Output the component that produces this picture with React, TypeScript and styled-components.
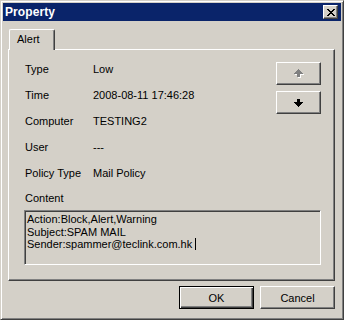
import React from "react";
import styled, { createGlobalStyle } from "styled-components";

const GlobalStyle = createGlobalStyle`
  html, body { margin: 0; padding: 0; background: #d4d0c8; }
  * { box-sizing: border-box; }
`;

const Window = styled.div`
  width: 344px;
  height: 320px;
  background: #d4d0c8;
  border: 1px solid;
  border-color: #d4d0c8 #404040 #404040 #d4d0c8;
  box-shadow: inset 1px 1px #fff, inset -1px -1px #808080;
  padding: 2px;
  display: flex;
  flex-direction: column;
  font-family: "Liberation Sans", Arial, sans-serif;
  font-size: 11px;
  color: #000;
`;

const TitleBar = styled.div`
  height: 18px;
  flex: none;
  background: #0a246a;
  display: flex;
  align-items: center;
  justify-content: space-between;
  padding: 0 3px 0 2px;
`;

const TitleText = styled.span`
  color: #fff;
  font-weight: bold;
  font-size: 12px;
  letter-spacing: 0.1px;
`;

const Raised = styled.div`
  background: #d4d0c8;
  border: 1px solid;
  border-color: #fff #404040 #404040 #fff;
  box-shadow: inset -1px -1px #808080;
`;

const CloseButton = styled(Raised)`
  width: 15px;
  height: 14px;
  display: flex;
  align-items: center;
  justify-content: center;
`;

const Body = styled.div`
  flex: 1;
  display: flex;
  flex-direction: column;
  padding: 8px 6px 8px 5px;
`;

const TabStrip = styled.div`
  height: 20px;
  flex: none;
  display: flex;
  padding-left: 1px;
  position: relative;
  z-index: 1;
`;

const Tab = styled.div`
  width: 46px;
  height: 21px;
  background: #d4d0c8;
  border-top: 1px solid #fff;
  border-left: 1px solid #fff;
  border-right: 1px solid #404040;
  box-shadow: inset -1px 0 #808080;
  border-radius: 2px 2px 0 0;
  padding: 3px 0 0 7px;
  line-height: 13px;
`;

const Panel = styled.div`
  flex: 1;
  display: flex;
  flex-direction: column;
  border-top: 1px solid #fff;
  border-left: 1px solid #fff;
  border-right: 1px solid #404040;
  border-bottom: 1px solid #404040;
  box-shadow: inset -1px -1px #808080;
  padding: 6px 13px 0 15px;
`;

const TopSection = styled.div`
  display: flex;
`;

const InfoList = styled.div`
  flex: 1;
  display: flex;
  flex-direction: column;
`;

const Row = styled.div<{ $h?: number }>`
  display: grid;
  grid-template-columns: 68px 1fr;
  height: ${(p) => p.$h ?? 26}px;
  line-height: ${(p) => p.$h ?? 26}px;
  padding-left: 1px;
  white-space: nowrap;
`;

const ButtonCol = styled.div`
  display: flex;
  flex-direction: column;
  gap: 6px;
  padding-top: 6px;
`;

const PushButton = styled(Raised)<{ $w?: number; $default?: boolean }>`
  width: ${(p) => p.$w ?? 45}px;
  height: 23px;
  display: flex;
  align-items: center;
  justify-content: center;
  ${(p) =>
    p.$default
      ? `border-color: #000;
         box-shadow: inset 1px 1px #fff, inset -1px -1px #404040, inset -2px -2px #808080;`
      : ``}
`;

const ContentLabelRow = styled.div`
  height: 24px;
  line-height: 24px;
  padding-left: 1px;
`;

const TextBox = styled.div`
  height: 55px;
  border: 1px solid;
  border-color: #808080 #fff #fff #808080;
  box-shadow: inset 1px 1px #404040, inset -1px -1px #d4d0c8;
  background: #d4d0c8;
  padding: 2px 2px;
  line-height: 12.5px;
  white-space: nowrap;
  overflow: hidden;
`;

const Caret = styled.span`
  display: inline-block;
  width: 1px;
  height: 12px;
  background: #000;
  vertical-align: -2px;
  margin-left: 3px;
`;

const Footer = styled.div`
  flex: none;
  display: flex;
  justify-content: flex-end;
  gap: 6px;
  margin-top: 5px;
`;

const ButtonLabel = styled.span`
  font-size: 11px;
`;

const Pixels: React.FC<{ rows: [number, number, number][]; w: number; h: number; color: string }> = ({
  rows,
  w,
  h,
  color,
}) => (
  <svg width={w} height={h} viewBox={`0 0 ${w} ${h}`} shapeRendering="crispEdges">
    {rows.map(([x, y, len], i) => (
      <rect key={i} x={x} y={y} width={len} height={1} fill={color} />
    ))}
  </svg>
);

const closeRows: [number, number, number][] = [
  [0, 0, 2], [6, 0, 2],
  [1, 1, 2], [5, 1, 2],
  [2, 2, 4],
  [3, 3, 2],
  [2, 4, 4],
  [1, 5, 2], [5, 5, 2],
  [0, 6, 2], [6, 6, 2],
];

const downRows: [number, number, number][] = [
  [3, 0, 3], [3, 1, 3], [3, 2, 3],
  [0, 3, 9], [1, 4, 7], [2, 5, 5], [3, 6, 3], [4, 7, 1],
];

const upRows: [number, number, number][] = [
  [4, 0, 1], [3, 1, 3], [2, 2, 5], [1, 3, 7], [0, 4, 9],
  [3, 5, 3], [3, 6, 3], [3, 7, 3],
];

const DisabledIcon = styled.div`
  position: relative;
  width: 10px;
  height: 9px;
  & > svg { position: absolute; }
  & > svg:first-child { left: 1px; top: 1px; }
  & > svg:last-child { left: 0; top: 0; }
`;

const rows = [
  ["Type", "Low"],
  ["Time", "2008-08-11 17:46:28"],
  ["Computer", "TESTING2"],
  ["User", "---"],
  ["Policy Type", "Mail Policy"],
];

export default function App() {
  return (
    <>
      <GlobalStyle />
      <Window>
        <TitleBar>
          <TitleText>Property</TitleText>
          <CloseButton>
            <Pixels rows={closeRows} w={8} h={7} color="#000" />
          </CloseButton>
        </TitleBar>
        <Body>
          <TabStrip>
            <Tab>Alert</Tab>
          </TabStrip>
          <Panel>
            <TopSection>
              <InfoList>
                {rows.map(([k, v]) => (
                  <Row key={k}>
                    <span>{k}</span>
                    <span>{v}</span>
                  </Row>
                ))}
              </InfoList>
              <ButtonCol>
                <PushButton>
                  <DisabledIcon>
                    <Pixels rows={upRows} w={9} h={8} color="#fff" />
                    <Pixels rows={upRows} w={9} h={8} color="#808080" />
                  </DisabledIcon>
                </PushButton>
                <PushButton>
                  <Pixels rows={downRows} w={9} h={8} color="#000" />
                </PushButton>
              </ButtonCol>
            </TopSection>
            <ContentLabelRow>Content</ContentLabelRow>
            <TextBox>
              Action:Block,Alert,Warning
              <br />
              Subject:SPAM MAIL
              <br />
              Sender:spammer@teclink.com.hk
              <Caret />
            </TextBox>
          </Panel>
          <Footer>
            <PushButton $w={75} $default>
              <ButtonLabel>OK</ButtonLabel>
            </PushButton>
            <PushButton $w={75}>
              <ButtonLabel>Cancel</ButtonLabel>
            </PushButton>
          </Footer>
        </Body>
      </Window>
    </>
  );
}
